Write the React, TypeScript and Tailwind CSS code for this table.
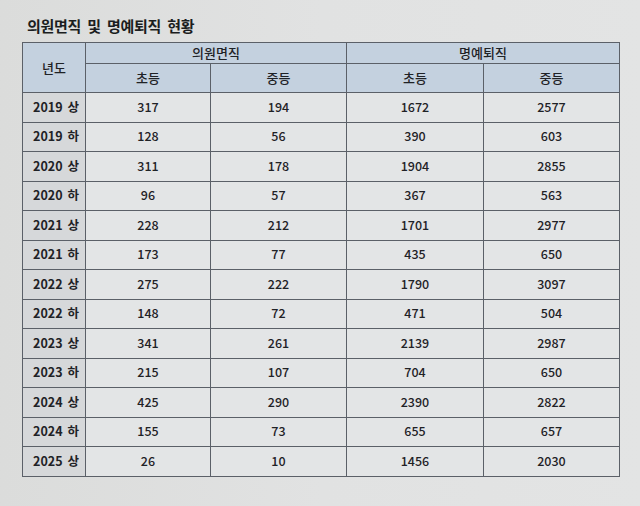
import React from "react";

const rows: [string, number, number, number, number][] = [
  ["2019 상", 317, 194, 1672, 2577],
  ["2019 하", 128, 56, 390, 603],
  ["2020 상", 311, 178, 1904, 2855],
  ["2020 하", 96, 57, 367, 563],
  ["2021 상", 228, 212, 1701, 2977],
  ["2021 하", 173, 77, 435, 650],
  ["2022 상", 275, 222, 1790, 3097],
  ["2022 하", 148, 72, 471, 504],
  ["2023 상", 341, 261, 2139, 2987],
  ["2023 하", 215, 107, 704, 650],
  ["2024 상", 425, 290, 2390, 2822],
  ["2024 하", 155, 73, 655, 657],
  ["2025 상", 26, 10, 1456, 2030],
];

export default function App() {
  return (
    <div
      className="w-[640px] h-[506px] overflow-hidden bg-gradient-to-r from-[#dbdcdb] via-[#e1e2e2] to-[#e3e4e4] text-[#1f2226]"
      style={{ fontFamily: '"Noto Sans CJK KR", "Noto Sans", sans-serif' }}
    >
      <div className="pl-[27px] pt-[15px] h-[42px] text-[15px] font-bold tracking-[-0.3px] leading-[22px] text-[#1b1d20]">
        의원면직 &nbsp;및 &nbsp;명예퇴직 &nbsp;현황
      </div>
      <table className="ml-[22px] border-collapse table-fixed text-[12.5px] font-medium">
        <colgroup>
          <col className="w-[63px]" />
          <col className="w-[125px]" />
          <col className="w-[136px]" />
          <col className="w-[137px]" />
          <col className="w-[136px]" />
        </colgroup>
        <thead>
          <tr className="h-[21px] bg-[#c4d1df]">
            <th rowSpan={2} className="border border-[#5b6068] font-medium text-center p-0 text-[13px]">
              년도
            </th>
            <th colSpan={2} className="border border-[#5b6068] font-medium text-center p-0 leading-[20px] text-[13px]">
              의원면직
            </th>
            <th colSpan={2} className="border border-[#5b6068] font-medium text-center p-0 leading-[20px] text-[13px]">
              명예퇴직
            </th>
          </tr>
          <tr className="h-[29px] bg-[#c4d1df]">
            <th className="border border-[#5b6068] font-medium text-center p-0 text-[13px]">초등</th>
            <th className="border border-[#5b6068] font-medium text-center p-0 text-[13px]">중등</th>
            <th className="border border-[#5b6068] font-medium text-center p-0 text-[13px]">초등</th>
            <th className="border border-[#5b6068] font-medium text-center p-0 text-[13px]">중등</th>
          </tr>
        </thead>
        <tbody>
          {rows.map((r) => (
            <tr key={r[0]} className="h-[29.5px] bg-[#e3e5e6]">
              <td className="border border-[#5b6068] bg-[#d6d8da] p-0 font-semibold">
                <span className="block text-left pl-[10px]">
                  {r[0].split(" ")[0]}
                  <span className="ml-[5px]">{r[0].split(" ")[1]}</span>
                </span>
              </td>
              <td className="border border-[#5b6068] text-center p-0">{r[1]}</td>
              <td className="border border-[#5b6068] text-center p-0">{r[2]}</td>
              <td className="border border-[#5b6068] text-center p-0">{r[3]}</td>
              <td className="border border-[#5b6068] text-center p-0">{r[4]}</td>
            </tr>
          ))}
        </tbody>
      </table>
    </div>
  );
}
